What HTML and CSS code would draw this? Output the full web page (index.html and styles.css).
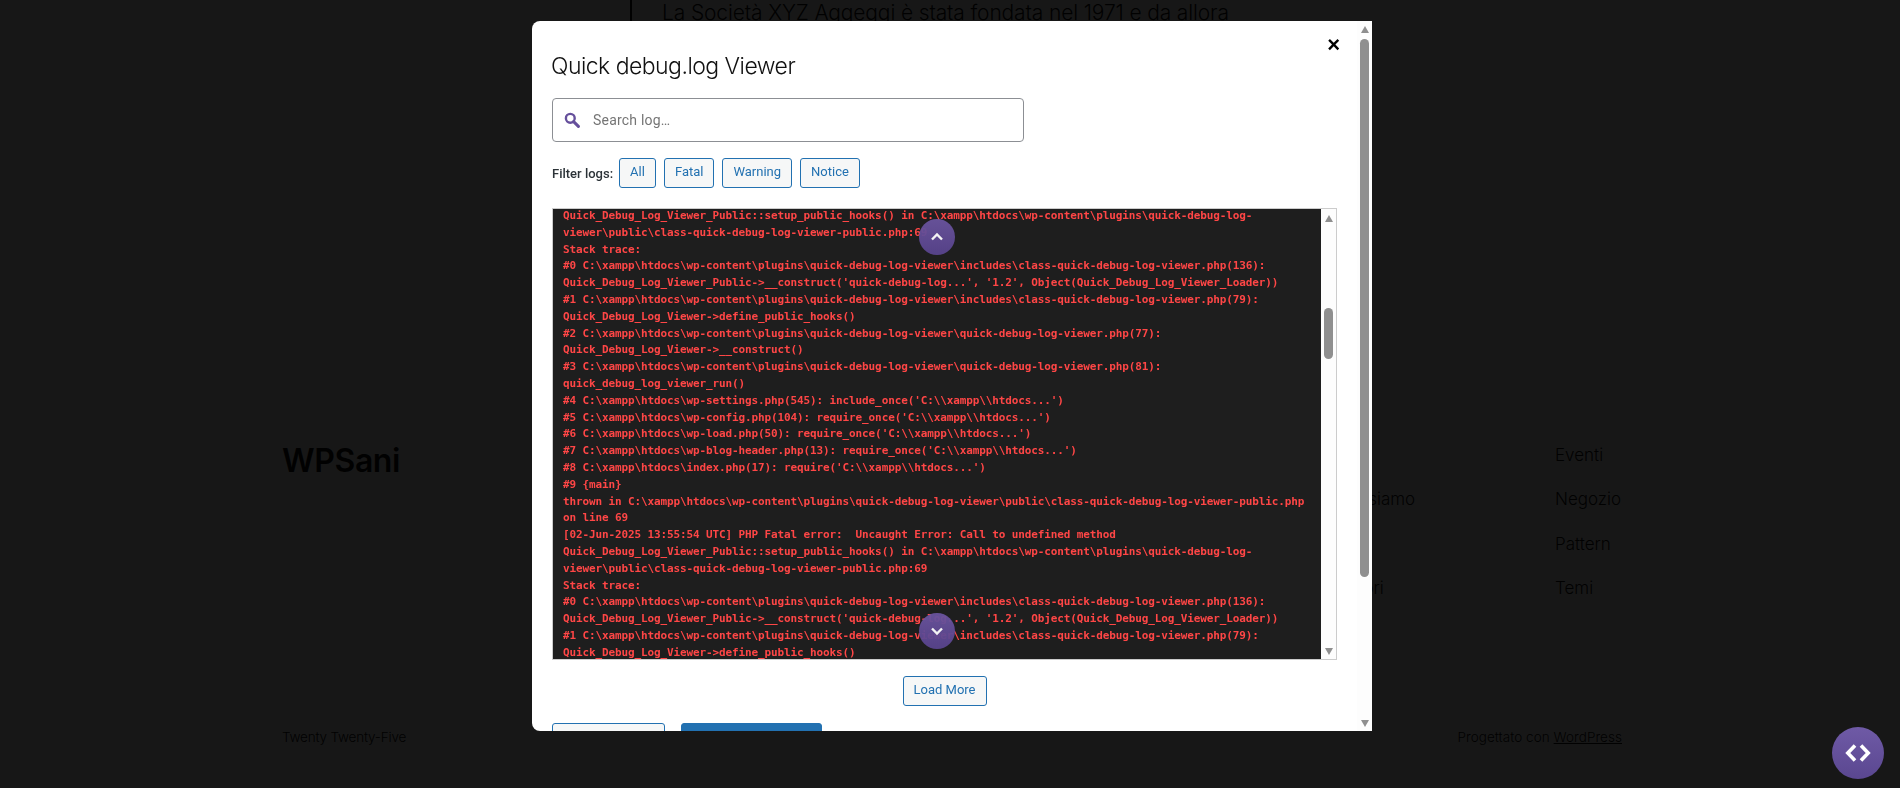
FILE: index.html
```html
<!DOCTYPE html>
<html lang="it">
<head>
<meta charset="utf-8">
<title>Quick debug.log Viewer</title>
<link rel="stylesheet" href="styles.css">
</head>
<body>
<div class="page">
  <blockquote class="intro"><p>La Società XYZ Aggeggi è stata fondata nel 1971 e da allora</p></blockquote>
  <footer class="site-footer">
    <div class="footer-top">
      <div class="brand">WPSani</div>
      <ul class="nav nav-first">
        <li>Blog</li>
        <li>Chi siamo</li>
        <li>FAQ</li>
        <li>Autori</li>
      </ul>
      <ul class="nav nav-second">
        <li>Eventi</li>
        <li>Negozio</li>
        <li>Pattern</li>
        <li>Temi</li>
      </ul>
    </div>
    <div class="credits">
      <span>Twenty Twenty-Five</span>
      <span class="credit-right">Progettato con <a href="#">WordPress</a></span>
    </div>
  </footer>
</div>

<div class="overlay">
  <div class="modal">
    <div class="modal-body">
      <button class="close" type="button">×</button>
      <h2 class="title">Quick debug.log Viewer</h2>
      <div class="search">
        <svg class="search-icon" viewBox="0 0 16 16" width="16" height="16" aria-hidden="true">
          <circle cx="6.3" cy="6.3" r="4.4" fill="none" stroke="#66509c" stroke-width="2.4"/>
          <path d="M9.6 9.6 14.4 14.4" stroke="#66509c" stroke-width="3" stroke-linecap="round"/>
        </svg>
        <span class="placeholder">Search log…</span>
      </div>
      <div class="filters">
        <span class="filter-label">Filter logs:</span>
        <button class="btn" type="button">All</button>
        <button class="btn" type="button">Fatal</button>
        <button class="btn" type="button">Warning</button>
        <button class="btn" type="button">Notice</button>
      </div>
      <div class="log-box">
        <div class="log">Quick_Debug_Log_Viewer_Public::setup_public_hooks() in C:\xampp\htdocs\wp-content\plugins\quick-debug-log-
viewer\public\class-quick-debug-log-viewer-public.php:69
Stack trace:
#0 C:\xampp\htdocs\wp-content\plugins\quick-debug-log-viewer\includes\class-quick-debug-log-viewer.php(136):
Quick_Debug_Log_Viewer_Public-&gt;__construct('quick-debug-log...', '1.2', Object(Quick_Debug_Log_Viewer_Loader))
#1 C:\xampp\htdocs\wp-content\plugins\quick-debug-log-viewer\includes\class-quick-debug-log-viewer.php(79):
Quick_Debug_Log_Viewer-&gt;define_public_hooks()
#2 C:\xampp\htdocs\wp-content\plugins\quick-debug-log-viewer\quick-debug-log-viewer.php(77):
Quick_Debug_Log_Viewer-&gt;__construct()
#3 C:\xampp\htdocs\wp-content\plugins\quick-debug-log-viewer\quick-debug-log-viewer.php(81):
quick_debug_log_viewer_run()
#4 C:\xampp\htdocs\wp-settings.php(545): include_once('C:\\xampp\\htdocs...')
#5 C:\xampp\htdocs\wp-config.php(104): require_once('C:\\xampp\\htdocs...')
#6 C:\xampp\htdocs\wp-load.php(50): require_once('C:\\xampp\\htdocs...')
#7 C:\xampp\htdocs\wp-blog-header.php(13): require_once('C:\\xampp\\htdocs...')
#8 C:\xampp\htdocs\index.php(17): require('C:\\xampp\\htdocs...')
#9 {main}
thrown in C:\xampp\htdocs\wp-content\plugins\quick-debug-log-viewer\public\class-quick-debug-log-viewer-public.php
on line 69
[02-Jun-2025 13:55:54 UTC] PHP Fatal error:  Uncaught Error: Call to undefined method
Quick_Debug_Log_Viewer_Public::setup_public_hooks() in C:\xampp\htdocs\wp-content\plugins\quick-debug-log-
viewer\public\class-quick-debug-log-viewer-public.php:69
Stack trace:
#0 C:\xampp\htdocs\wp-content\plugins\quick-debug-log-viewer\includes\class-quick-debug-log-viewer.php(136):
Quick_Debug_Log_Viewer_Public-&gt;__construct('quick-debug-log...', '1.2', Object(Quick_Debug_Log_Viewer_Loader))
#1 C:\xampp\htdocs\wp-content\plugins\quick-debug-log-viewer\includes\class-quick-debug-log-viewer.php(79):
Quick_Debug_Log_Viewer-&gt;define_public_hooks()</div>
        <div class="bar bar-inner">
          <span class="arrow arrow-up"></span>
          <span class="track"><span class="thumb thumb-inner"></span></span>
          <span class="arrow arrow-down"></span>
        </div>
        <button class="jump jump-up" type="button" aria-label="Scroll up">
          <svg viewBox="0 0 16 16" width="16" height="16" aria-hidden="true"><path d="M3 10.5 8 5.5 13 10.5" fill="none" stroke="#fff" stroke-width="2.4"/></svg>
        </button>
        <button class="jump jump-down" type="button" aria-label="Scroll down">
          <svg viewBox="0 0 16 16" width="16" height="16" aria-hidden="true"><path d="M3 5.5 8 10.5 13 5.5" fill="none" stroke="#fff" stroke-width="2.4"/></svg>
        </button>
      </div>
      <div class="more">
        <button class="btn" type="button">Load More</button>
      </div>
      <div class="actions">
        <button class="btn action-secondary" type="button" aria-label="Secondary action"></button>
        <button class="btn action-primary" type="button" aria-label="Primary action"></button>
      </div>
    </div>
    <div class="bar bar-outer">
      <span class="arrow arrow-up"></span>
      <span class="track"><span class="thumb thumb-outer"></span></span>
      <span class="arrow arrow-down"></span>
    </div>
  </div>
</div>

<button class="fab" type="button" aria-label="Open log viewer">
  <svg viewBox="0 0 26 20" width="26" height="20" aria-hidden="true">
    <path d="M10 2.5 2.8 10 10 17.5M16 2.5 23.2 10 16 17.5" fill="none" stroke="#fff" stroke-width="3.6"/>
  </svg>
</button>
</body>
</html>
```

FILE: styles.css
```css
* { box-sizing: border-box; }

html, body {
  margin: 0;
  height: 100%;
  overflow: hidden;
}

body {
  background: #fff;
  color: #111;
  font-family: "Inter", "Noto Sans", sans-serif;
}

.page {
  height: 788px;
  padding: 0 278px 0 282px;
  display: flex;
  flex-direction: column;
}

.intro {
  margin: 0 0 0 348px;
  height: 433px;
  padding: 0 0 0 30px;
  border-left: 2px solid #111;
}

.intro p {
  margin: 0;
  font-size: 21px;
  font-weight: 300;
  line-height: 26px;
  letter-spacing: -0.14px;
  white-space: nowrap;
}

.site-footer {
  flex: 1;
  display: flex;
  flex-direction: column;
}

.footer-top {
  display: flex;
  padding-top: 9px;
  height: 294px;
}

.brand {
  flex: 1;
  margin-top: 1px;
  font-size: 32px;
  font-weight: 600;
  letter-spacing: -0.4px;
  line-height: 36px;
}

.nav {
  list-style: none;
  margin: 0;
  padding: 0;
  font-size: 17px;
  font-weight: 300;
  line-height: 27px;
  display: flex;
  flex-direction: column;
  gap: 17.4px;
}

.nav-first { width: 218px; }
.nav-second { width: 67px; }

.credits {
  display: flex;
  justify-content: space-between;
  font-size: 13.5px;
  font-weight: 300;
  line-height: 20px;
  letter-spacing: -0.2px;
}

.credit-right { letter-spacing: 0.05px; }

.credits a { color: inherit; }

.overlay {
  position: fixed;
  inset: 0;
  background: rgba(0, 0, 0, 0.91);
  display: flex;
  justify-content: center;
  padding: 21px 0 57px 4px;
}

.modal {
  width: 840px;
  height: 710px;
  background: #fff;
  border-radius: 8px 0 0 8px;
  overflow: hidden;
  display: flex;
  position: relative;
}

.modal-body {
  flex: 1;
  min-width: 0;
  padding: 29px 20px 0;
  position: relative;
}

.close {
  position: absolute;
  top: 10px;
  right: 17px;
  border: 0;
  padding: 0;
  background: none;
  color: #000;
  font-family: "Liberation Sans", sans-serif;
  font-size: 22px;
  font-weight: 700;
  line-height: 28px;
}

.title {
  margin: 0 0 0 -1px;
  color: #111;
  font-size: 23px;
  font-weight: 300;
  line-height: 32px;
  letter-spacing: -0.53px;
}

.search {
  margin-top: 16px;
  width: 472px;
  height: 44px;
  border: 1px solid #8c8f94;
  border-radius: 4px;
  padding-left: 11px;
  display: flex;
  align-items: center;
  gap: 13px;
}

.search-icon { flex: none; }

.placeholder {
  color: #757575;
  font-family: "Roboto", sans-serif;
  font-size: 14px;
  letter-spacing: 0.2px;
}

.filters {
  margin-top: 16px;
  display: flex;
  align-items: center;
  gap: 8px;
}

.filter-label {
  margin-right: -2px;
  color: #2c3338;
  font-family: "Roboto", sans-serif;
  font-size: 13px;
  font-weight: 500;
}

.btn {
  height: 30px;
  padding: 0 10px 2px;
  border: 1px solid #2271b1;
  border-radius: 3px;
  background: #f6f7f7;
  color: #2271b1;
  font-family: "Roboto", sans-serif;
  font-size: 13px;
  line-height: 26px;
}

.log-box {
  margin-top: 20px;
  width: 785px;
  height: 452px;
  border: 1px solid #ccc;
  display: flex;
  position: relative;
}

.log {
  flex: 1;
  min-width: 0;
  overflow: hidden;
  padding: 0 10px;
  background: #1e1e1e;
  color: #ff4646;
  font-family: "DejaVu Sans Mono", monospace;
  font-size: 11px;
  font-weight: 700;
  line-height: 16.8px;
  letter-spacing: -0.12px;
  white-space: pre;
}

.log::before {
  content: "";
  display: block;
  margin-top: -1px;
}

.bar {
  flex: none;
  width: 15px;
  background: #fdfdfd;
  display: flex;
  flex-direction: column;
  align-items: center;
}

.arrow {
  flex: none;
  width: 0;
  height: 0;
  border-left: 4.5px solid transparent;
  border-right: 4.5px solid transparent;
}

.arrow-up { border-bottom: 7px solid #8f8f8f; }
.arrow-down { border-top: 7px solid #8f8f8f; }

.bar-inner .arrow-up { margin-top: 6px; }
.bar-inner .arrow-down { margin-bottom: 4px; }
.bar-outer .arrow-up { margin-top: 5px; }
.bar-outer .arrow-down { margin-bottom: 4px; }

.track {
  flex: 1;
  width: 9px;
  display: block;
}

.thumb {
  display: block;
  width: 9px;
  background: #8f8f8f;
  border-radius: 4.5px;
}

.thumb-inner {
  margin-top: 86px;
  height: 51px;
}

.thumb-outer {
  margin-top: 6px;
  height: 538px;
}

.jump {
  position: absolute;
  left: 366px;
  width: 36px;
  height: 36px;
  padding: 0;
  border: 0;
  border-radius: 50%;
  background: linear-gradient(#6a549f, #59448d);
  opacity: 0.95;
  display: flex;
  align-items: center;
  justify-content: center;
}

.jump-up { top: 10px; }
.jump-down { bottom: 10px; }

.more {
  margin-top: 16px;
  display: flex;
  justify-content: center;
}

.actions {
  margin-top: 17px;
  display: flex;
  gap: 16px;
}

.action-secondary { width: 113px; height: 40px; }

.action-primary {
  width: 141px;
  height: 40px;
  background: #2271b1;
  color: #fff;
}

.fab {
  position: fixed;
  left: 1832px;
  top: 727px;
  width: 52px;
  height: 52px;
  padding: 0;
  border: 0;
  border-radius: 50%;
  background: linear-gradient(#6f5aa6, #5a4790);
  display: flex;
  align-items: center;
  justify-content: center;
}
```
